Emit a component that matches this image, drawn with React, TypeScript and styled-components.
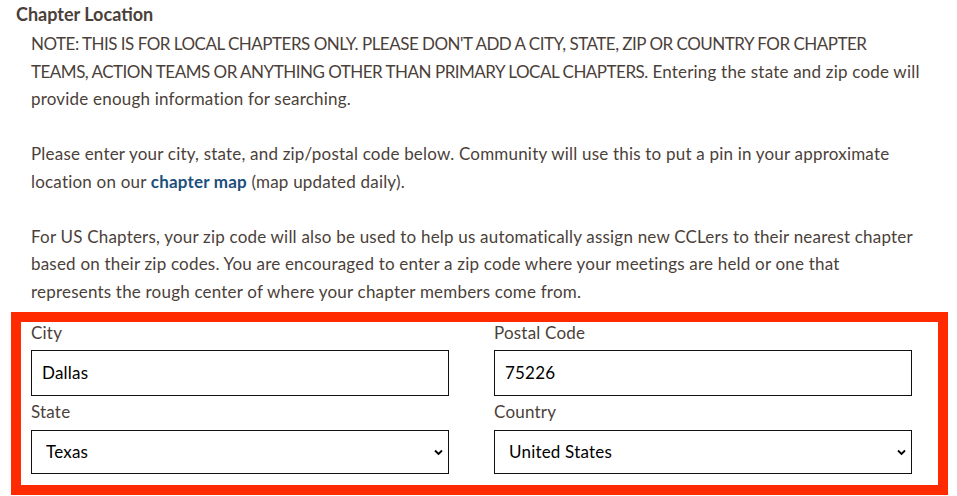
import React from "react";
import styled, { createGlobalStyle } from "styled-components";

const GlobalStyle = createGlobalStyle`
  body {
    margin: 0;
    background: #ffffff;
    font-family: "Lato", "Liberation Sans", sans-serif;
    color: #4b3f3a;
  }
`;

const Section = styled.section`
  width: 957px;
  height: 496px;
  overflow: hidden;
  padding: 2px 0 0 0;
  box-sizing: border-box;
`;

const Heading = styled.h3`
  margin: 0 0 0 16px;
  font-size: 18px;
  line-height: 24px;
  font-weight: 700;
`;

const Notes = styled.div`
  padding: 4px 0 0 31px;
`;

const Para = styled.p`
  margin: 0 0 27.5px 0;
  font-size: 17px;
  line-height: 27.5px;
  letter-spacing: 0.2px;
  white-space: nowrap;
`;

const Caps = styled.span`
  letter-spacing: -0.5px;
`;

const MapLink = styled.a`
  color: #1d4f7c;
  font-weight: 700;
  text-decoration: none;
`;

const Highlight = styled.div`
  margin: -21px 9px 0 11px;
  border: 10px solid #ff2a00;
  padding: 0 26px 11px 10px;
  display: grid;
  grid-template-columns: 418px 418px;
  column-gap: 45px;
  row-gap: 5px;
`;

const Field = styled.label`
  display: flex;
  flex-direction: column;
`;

const Label = styled.span<{ $gap: number }>`
  font-size: 17px;
  line-height: 22px;
  margin: 0 0 ${(p) => p.$gap}px 0;
  letter-spacing: 0.2px;
  color: #4b3f3a;
`;

const TextInput = styled.input`
  box-sizing: border-box;
  height: 46px;
  border: 1px solid #111;
  padding: 0 10px;
  font-family: "Lato", "Liberation Sans", sans-serif;
  font-size: 17px;
  letter-spacing: 0.2px;
  color: #000;
  background: #fff;
  outline: none;
`;

const SelectWrap = styled.div`
  position: relative;
  height: 44px;
`;

const Select = styled.select`
  appearance: none;
  box-sizing: border-box;
  width: 100%;
  height: 44px;
  border: 1px solid #111;
  padding: 0 30px 0 14px;
  font-family: "Lato", "Liberation Sans", sans-serif;
  font-size: 17px;
  letter-spacing: 0.2px;
  color: #000;
  background: #fff;
  border-radius: 0;
  outline: none;
`;

const Chevron = styled.svg`
  position: absolute;
  right: 6px;
  top: 19px;
  width: 9px;
  height: 7px;
  pointer-events: none;
`;

function Dropdown({ value }: { value: string }) {
  return (
    <SelectWrap>
      <Select defaultValue={value}>
        <option>{value}</option>
      </Select>
      <Chevron viewBox="0 0 9 7">
        <path d="M1 1.5 L4.5 5 L8 1.5" fill="none" stroke="#000" strokeWidth="1.8" />
      </Chevron>
    </SelectWrap>
  );
}

export default function App() {
  return (
    <Section>
      <GlobalStyle />
      <Heading>Chapter Location</Heading>
      <Notes>
        <Para>
          <Caps>NOTE: THIS IS FOR LOCAL CHAPTERS ONLY. PLEASE DON'T ADD A CITY, STATE, ZIP OR COUNTRY FOR CHAPTER</Caps>
          <br />
          <Caps>TEAMS, ACTION TEAMS OR ANYTHING OTHER THAN PRIMARY LOCAL CHAPTERS.</Caps> Entering the state and zip code will
          <br />
          provide enough information for searching.
        </Para>
        <Para>
          Please enter your city, state, and zip/postal code below. Community will use this to put a pin in your approximate
          <br />
          location on our <MapLink href="#">chapter map</MapLink> (map updated daily).
        </Para>
        <Para>
          For US Chapters, your zip code will also be used to help us automatically assign new CCLers to their nearest chapter
          <br />
          based on their zip codes. You are encouraged to enter a zip code where your meetings are held or one that
          <br />
          represents the rough center of where your chapter members come from.
        </Para>
      </Notes>
      <Highlight>
        <Field>
          <Label $gap={6}>City</Label>
          <TextInput defaultValue="Dallas" />
        </Field>
        <Field>
          <Label $gap={6}>Postal Code</Label>
          <TextInput defaultValue="75226" />
        </Field>
        <Field as="div">
          <Label $gap={7}>State</Label>
          <Dropdown value="Texas" />
        </Field>
        <Field as="div">
          <Label $gap={7}>Country</Label>
          <Dropdown value="United States" />
        </Field>
      </Highlight>
    </Section>
  );
}
